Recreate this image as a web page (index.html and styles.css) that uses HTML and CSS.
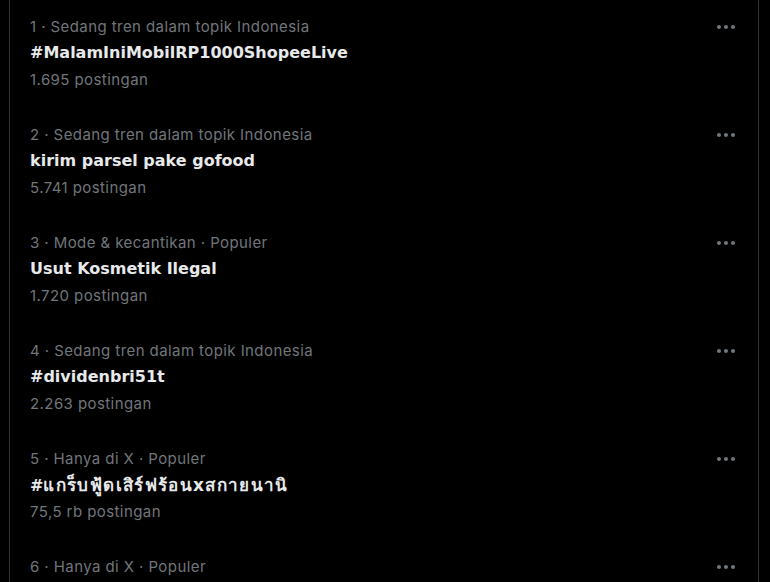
FILE: index.html
```html
<!DOCTYPE html>
<html lang="id">
<head>
	<meta charset="UTF-8">
	<meta name="viewport" content="width=device-width">
	<title>Tren</title>
	<link rel="stylesheet" href="styles.css">
</head>
<body>
<main class="timeline">

	<div class="trend">
		<div class="trend-body">
			<div class="trend-meta">1 · Sedang tren dalam topik Indonesia</div>
			<div class="trend-name">#MalamIniMobilRP1000ShopeeLive</div>
			<div class="trend-count">1.695 postingan</div>
		</div>
		<svg class="more" viewBox="0 0 24 24"><path d="M3 12c0-1.1.9-2 2-2s2 .9 2 2-.9 2-2 2-2-.9-2-2zm9 2c1.1 0 2-.9 2-2s-.9-2-2-2-2 .9-2 2 .9 2 2 2zm7 0c1.1 0 2-.9 2-2s-.9-2-2-2-2 .9-2 2 .9 2 2 2z"/></svg>
	</div>

	<div class="trend">
		<div class="trend-body">
			<div class="trend-meta">2 · Sedang tren dalam topik Indonesia</div>
			<div class="trend-name">kirim parsel pake gofood</div>
			<div class="trend-count">5.741 postingan</div>
		</div>
		<svg class="more" viewBox="0 0 24 24"><path d="M3 12c0-1.1.9-2 2-2s2 .9 2 2-.9 2-2 2-2-.9-2-2zm9 2c1.1 0 2-.9 2-2s-.9-2-2-2-2 .9-2 2 .9 2 2 2zm7 0c1.1 0 2-.9 2-2s-.9-2-2-2-2 .9-2 2 .9 2 2 2z"/></svg>
	</div>

	<div class="trend">
		<div class="trend-body">
			<div class="trend-meta">3 · Mode &amp; kecantikan · Populer</div>
			<div class="trend-name">Usut Kosmetik Ilegal</div>
			<div class="trend-count">1.720 postingan</div>
		</div>
		<svg class="more" viewBox="0 0 24 24"><path d="M3 12c0-1.1.9-2 2-2s2 .9 2 2-.9 2-2 2-2-.9-2-2zm9 2c1.1 0 2-.9 2-2s-.9-2-2-2-2 .9-2 2 .9 2 2 2zm7 0c1.1 0 2-.9 2-2s-.9-2-2-2-2 .9-2 2 .9 2 2 2z"/></svg>
	</div>

	<div class="trend">
		<div class="trend-body">
			<div class="trend-meta">4 · Sedang tren dalam topik Indonesia</div>
			<div class="trend-name">#dividenbri51t</div>
			<div class="trend-count">2.263 postingan</div>
		</div>
		<svg class="more" viewBox="0 0 24 24"><path d="M3 12c0-1.1.9-2 2-2s2 .9 2 2-.9 2-2 2-2-.9-2-2zm9 2c1.1 0 2-.9 2-2s-.9-2-2-2-2 .9-2 2 .9 2 2 2zm7 0c1.1 0 2-.9 2-2s-.9-2-2-2-2 .9-2 2 .9 2 2 2z"/></svg>
	</div>

	<div class="trend">
		<div class="trend-body">
			<div class="trend-meta">5 · Hanya di X · Populer</div>
			<div class="trend-name">#<span class="thai">แกร็บฟู้ดเสิร์ฟร้อนxสกายนานิ</span></div>
			<div class="trend-count">75,5 rb postingan</div>
		</div>
		<svg class="more" viewBox="0 0 24 24"><path d="M3 12c0-1.1.9-2 2-2s2 .9 2 2-.9 2-2 2-2-.9-2-2zm9 2c1.1 0 2-.9 2-2s-.9-2-2-2-2 .9-2 2 .9 2 2 2zm7 0c1.1 0 2-.9 2-2s-.9-2-2-2-2 .9-2 2 .9 2 2 2z"/></svg>
	</div>

	<!-- last row is cut by the window, only its first line shows -->
	<div class="trend">
		<div class="trend-body">
			<div class="trend-meta">6 · Hanya di X · Populer</div>
		</div>
		<svg class="more" viewBox="0 0 24 24"><path d="M3 12c0-1.1.9-2 2-2s2 .9 2 2-.9 2-2 2-2-.9-2-2zm9 2c1.1 0 2-.9 2-2s-.9-2-2-2-2 .9-2 2 .9 2 2 2zm7 0c1.1 0 2-.9 2-2s-.9-2-2-2-2 .9-2 2 .9 2 2 2z"/></svg>
	</div>

</main>
</body>
</html>
```

FILE: styles.css
```css
html, body {
	background: #000;
}

body {
	margin: 0;
	font-family: Inter, "Open Sans", "Noto Sans", sans-serif;
	font-size: 15px;
	color: #e7e9ea;
	overflow: hidden;
}

.timeline {
	margin-left: 9px;
	width: 748px;
	height: 582px;
	overflow: hidden;
	border-left: 1px solid #2f3336;
	border-right: 1px solid #2f3336;
}

.trend {
	display: flex;
	align-items: flex-start;
	height: 108px;
	box-sizing: border-box;
	padding: 17px 20px 0 20px;
}

.trend-body {
	flex: 1;
	line-height: 20px;
}

.trend-meta,
.trend-count {
	color: #71767b;
	letter-spacing: 0.42px;
}

.trend-name {
	margin-top: 6px;
	height: 20px;
	font-family: "DejaVu Sans", Inter, sans-serif;
	font-size: 16px;
	font-weight: 700;
	white-space: nowrap;
}

/* thai glyphs fall back to a narrower face, so widen a bit */
.trend-name .thai {
	font-size: 17px;
	letter-spacing: 1.35px;
}

.trend-count {
	margin-top: 7px;
}

.more {
	width: 24px;
	height: 24px;
	margin-top: -2px;
	fill: #71767b;
}
```
